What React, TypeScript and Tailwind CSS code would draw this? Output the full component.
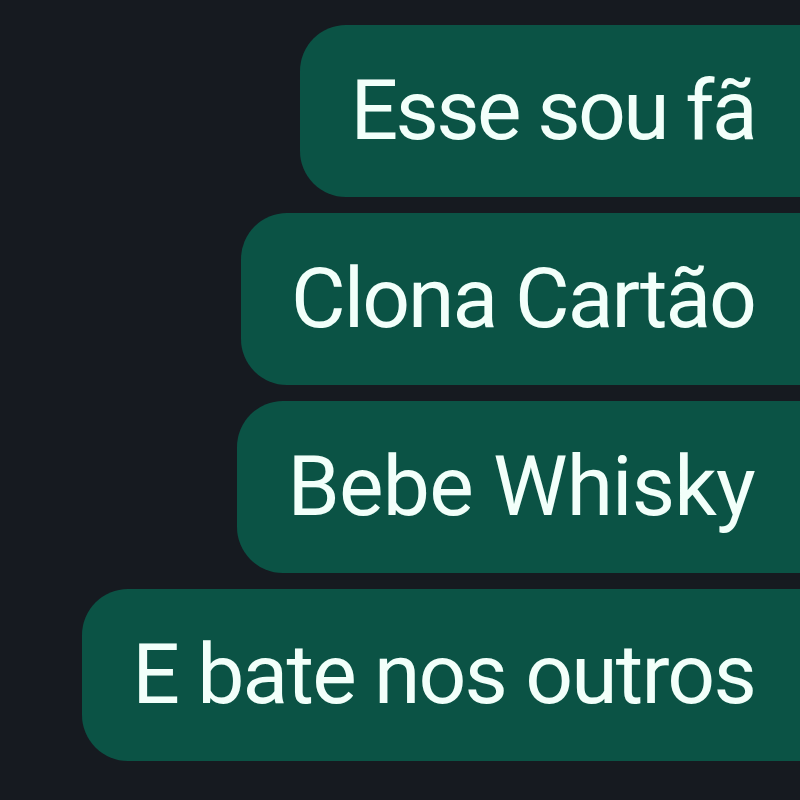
export default function App() {
  const msgs = [
    { t: "Esse sou fã", c: "tracking-[-2.6px]" },
    { t: "Clona Cartão", c: "tracking-[-2px]" },
    { t: "Bebe Whisky", c: "tracking-[-0.8px]" },
    { t: "E bate nos outros", c: "tracking-[-1.8px]" },
  ];
  return (
    <div className="w-[800px] h-[800px] overflow-hidden bg-[#161a20] flex flex-col items-end gap-[16px] pt-[25px]" style={{ fontFamily: "Roboto, 'Liberation Sans', sans-serif" }}>
      {msgs.map((m) => (
        <div key={m.t} className={`h-[172px] flex items-center bg-[#0b5345] rounded-l-[46px] pl-[50px] pr-[45px] text-[#f2fffa] text-[84px] leading-none whitespace-nowrap ${m.c}`}>
          {m.t}
        </div>
      ))}
    </div>
  );
}
